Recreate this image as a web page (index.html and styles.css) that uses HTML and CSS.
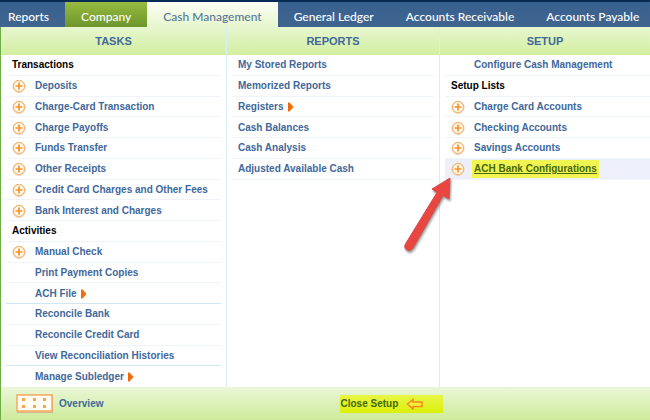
FILE: index.html
```html
<!DOCTYPE html>
<html lang="en">
<head>
<meta charset="utf-8">
<title>Cash Management</title>
<link rel="stylesheet" href="styles.css">
</head>
<body>
<svg class="defs" aria-hidden="true">
  <symbol id="plus" viewBox="0 0 14 14">
    <circle cx="7" cy="7.3" r="6" fill="#fffaf0" stroke="#e2bd96" stroke-width="1"/>
    <circle cx="7" cy="7" r="5.5" fill="none" stroke="#f8b468"/>
    <path d="M7 3.500v7M3.500 7h7" stroke="#f6922b" stroke-width="1.7"/>
  </symbol>
  <symbol id="more" viewBox="0 0 6 10">
    <path d="M0 0.5L1.5 0.5L5.5 5L1.5 9.5L0 9.5Z" fill="#ee6c0c"/>
  </symbol>
</svg>
<nav class="tabs">
  <a class="tab tab-first" href="#">Reports</a>
  <a class="tab company" href="#">Company</a>
  <a class="tab current" href="#">Cash Management</a>
  <a class="tab" href="#">General Ledger</a>
  <a class="tab" href="#">Accounts Receivable</a>
  <a class="tab" href="#">Accounts Payable</a>
</nav>
<main class="menu">
  <section class="column tasks">
    <h2>TASKS</h2>
    <ul>
      <li class="group">Transactions</li>
      <li><button aria-label="Add deposit"><svg><use href="#plus"/></svg></button><a href="#">Deposits</a></li>
      <li><button aria-label="Add charge-card transaction"><svg><use href="#plus"/></svg></button><a href="#">Charge-Card Transaction</a></li>
      <li><button aria-label="Add charge payoff"><svg><use href="#plus"/></svg></button><a href="#">Charge Payoffs</a></li>
      <li><button aria-label="Add funds transfer"><svg><use href="#plus"/></svg></button><a href="#">Funds Transfer</a></li>
      <li><button aria-label="Add other receipt"><svg><use href="#plus"/></svg></button><a href="#">Other Receipts</a></li>
      <li><button aria-label="Add credit card charge"><svg><use href="#plus"/></svg></button><a href="#">Credit Card Charges and Other Fees</a></li>
      <li><button aria-label="Add bank interest"><svg><use href="#plus"/></svg></button><a href="#">Bank Interest and Charges</a></li>
      <li class="group">Activities</li>
      <li><button aria-label="Add manual check"><svg><use href="#plus"/></svg></button><a href="#">Manual Check</a></li>
      <li class="indent"><a href="#">Print Payment Copies</a></li>
      <li class="indent divide"><a href="#">ACH File</a><svg class="more"><use href="#more"/></svg></li>
      <li class="indent"><a href="#">Reconcile Bank</a></li>
      <li class="indent"><a href="#">Reconcile Credit Card</a></li>
      <li class="indent divide"><a href="#">View Reconciliation Histories</a></li>
      <li class="indent"><a href="#">Manage Subledger</a><svg class="more"><use href="#more"/></svg></li>
    </ul>
  </section>
  <section class="column reports">
    <h2>REPORTS</h2>
    <ul>
      <li><a href="#">My Stored Reports</a></li>
      <li><a href="#">Memorized Reports</a></li>
      <li><a href="#">Registers</a><svg class="more"><use href="#more"/></svg></li>
      <li><a href="#">Cash Balances</a></li>
      <li><a href="#">Cash Analysis</a></li>
      <li><a href="#">Adjusted Available Cash</a></li>
    </ul>
  </section>
  <section class="column setup">
    <h2>SETUP</h2>
    <ul>
      <li class="indent"><a href="#">Configure Cash Management</a></li>
      <li class="group">Setup Lists</li>
      <li><button aria-label="Add charge card account"><svg><use href="#plus"/></svg></button><a href="#">Charge Card Accounts</a></li>
      <li><button aria-label="Add checking account"><svg><use href="#plus"/></svg></button><a href="#">Checking Accounts</a></li>
      <li><button aria-label="Add savings account"><svg><use href="#plus"/></svg></button><a href="#">Savings Accounts</a></li>
      <li class="active"><button aria-label="Add ACH bank configuration"><svg><use href="#plus"/></svg></button><a href="#" class="marked">ACH Bank Configurations</a>
        <svg class="pointer" viewBox="0 0 58 84" aria-hidden="true">
          <path d="M49 1L48 22L42 18.500L12 71Q9 75 6 73Q2 71 5 66L36 15.500L31 12Z" fill="#e94641" stroke="#d94a46" stroke-width="1"/>
        </svg>
      </li>
    </ul>
  </section>
</main>
<footer>
  <a class="overview" href="#">
    <svg viewBox="0 0 38 20" aria-hidden="true">
      <rect x="1.5" y="2" width="35" height="16.5" fill="none" stroke="#d5b492"/>
      <rect x="1" y="1" width="35" height="16" fill="#fffdf4" stroke="#f7a85c" stroke-width="1.5"/>
      <path d="M6 4h3v3H6zM17 4h3v3h-3zM27 4h3v3h-3zM6 11h3v3H6zM17 11h3v3h-3zM27 11h3v3h-3z" fill="#f9a54e"/>
    </svg>
    Overview
  </a>
  <button class="close">Close Setup
    <svg viewBox="0 0 18 12" aria-hidden="true">
      <path d="M1.500 6L7 1.500V4H16V8.500H7V11Z" fill="#f6ef3c" stroke="#f58a18" stroke-width="1.500"/>
    </svg>
  </button>
</footer>
</body>
</html>
```
FILE: styles.css
```css
* { box-sizing: border-box; }
body {
  margin: 0;
  min-height: 100vh;
  display: flex;
  flex-direction: column;
  background: #fff;
  font: bold 10px/14px "Liberation Sans", Arial, sans-serif;
  color: #41689a;
}
a { color: inherit; text-decoration: none; white-space: nowrap; }
button { border: 0; padding: 0; background: none; font: inherit; color: inherit; cursor: pointer; }
.defs { display: none; }
.tabs {
  display: flex;
  height: 27px;
  border-top: 2px solid #092c56;
  background: linear-gradient(#38608f, #40668f);
  overflow: hidden;
  font: 500 12px/30px Lato, "Open Sans", sans-serif;
  color: #fff;
}
.tab { padding: 0 16px; }
.tab-first { padding-left: 8px; }
.company { background: linear-gradient(#97bb40, #6d962b); }
.current { background: linear-gradient(#fcfef7, #e6f6cc); color: #58779b; }
.menu {
  flex: 1;
  display: grid;
  grid-template-columns: minmax(0, 226fr) minmax(0, 213fr) minmax(0, 210fr);
  border-left: 1px solid #6fae45;
}
.column { display: flex; flex-direction: column; border-right: 1px solid #d9ecf8; }
.setup { border-right: 0; }
h2 {
  margin: 0;
  height: 28px;
  font-size: 11px;
  line-height: 28px;
  text-align: center;
  background: linear-gradient(#e7f6cf, #d2efa0);
}
ul {
  flex: 1;
  display: grid;
  grid-template-rows: repeat(16, minmax(0, 1fr));
  list-style: none;
  margin: 0 5px;
  padding: 0;
}
.setup ul { margin-right: 0; }
li { position: relative; display: flex; align-items: center; padding: 1px 0 0 6px; border-bottom: 1px solid #eff4fa; }
.tasks li:last-child { border-bottom: 0; }
.group { color: #000; }
li button { display: flex; margin-right: 9px; }
li button svg { width: 14px; height: 14px; }
.indent { padding-left: 29px; }
.divide { border-color: #cfe7f5; }
.more { width: 6px; height: 10px; margin-left: 4px; }
.active { background: #edf0fa; }
.marked { background: #f0f551; color: #48680b; text-decoration: underline; padding: 2px; margin-left: -2px; }
.pointer { position: absolute; left: -44px; top: 18px; width: 58px; height: 84px; filter: drop-shadow(1px 2px 1px rgba(0, 0, 0, 0.4)); }
footer {
  display: grid;
  grid-template-columns: 340fr 310fr;
  align-items: center;
  justify-items: start;
  height: 33px;
  border-left: 1px solid #6fae45;
  background: linear-gradient(#eaf7d8, #cdeb9b);
}
.overview { display: flex; align-items: center; gap: 5px; padding-left: 15px; }
.overview svg { width: 38px; height: 20px; }
.close { display: flex; align-items: center; gap: 8px; width: 103px; height: 18px; background: linear-gradient(#e8f545, #dcf00c); color: #41680c; white-space: nowrap; }
.close svg { width: 18px; height: 12px; }
```
